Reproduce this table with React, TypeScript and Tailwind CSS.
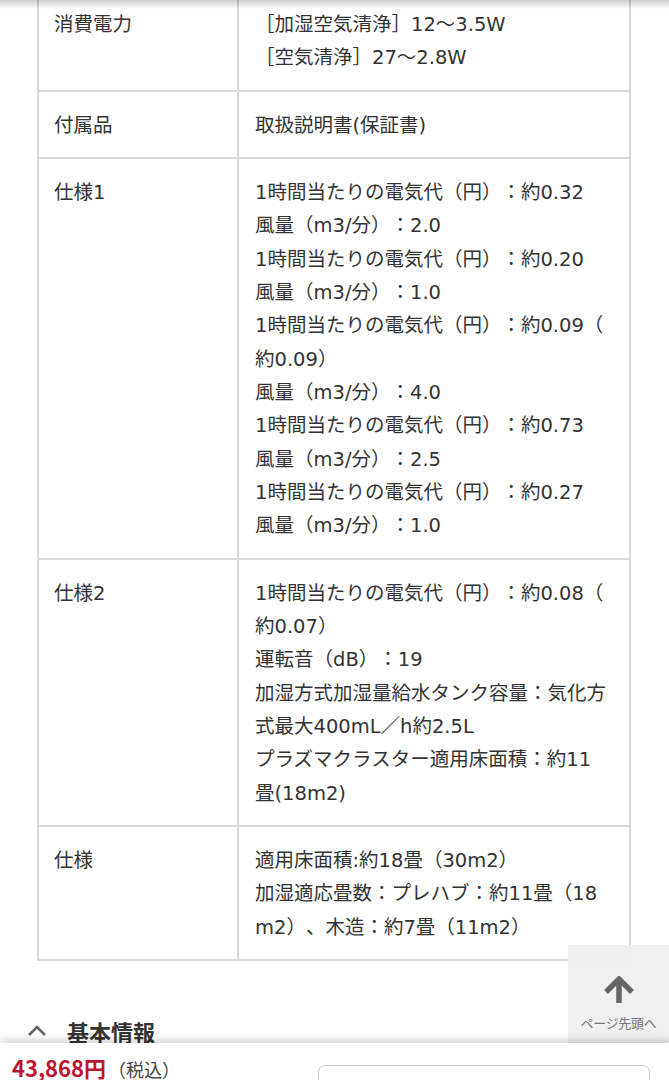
import React from "react";

const rows: { label: string; lines: string[] }[] = [
  { label: "消費電力", lines: ["［加湿空気清浄］12〜3.5W", "［空気清浄］27〜2.8W"] },
  { label: "付属品", lines: ["取扱説明書(保証書)"] },
  {
    label: "仕様1",
    lines: [
      "1時間当たりの電気代（円）：約0.32",
      "風量（m3/分）：2.0",
      "1時間当たりの電気代（円）：約0.20",
      "風量（m3/分）：1.0",
      "1時間当たりの電気代（円）：約0.09（",
      "約0.09）",
      "風量（m3/分）：4.0",
      "1時間当たりの電気代（円）：約0.73",
      "風量（m3/分）：2.5",
      "1時間当たりの電気代（円）：約0.27",
      "風量（m3/分）：1.0",
    ],
  },
  {
    label: "仕様2",
    lines: [
      "1時間当たりの電気代（円）：約0.08（",
      "約0.07）",
      "運転音（dB）：19",
      "加湿方式加湿量給水タンク容量：気化方",
      "式最大400mL／h約2.5L",
      "プラズマクラスター適用床面積：約11",
      "畳(18m2)",
    ],
  },
  {
    label: "仕様",
    lines: [
      "適用床面積:約18畳（30m2）",
      "加湿適応畳数：プレハブ：約11畳（18",
      "m2）、木造：約7畳（11m2）",
    ],
  },
];

export default function App() {
  return (
    <div
      className="relative h-[1080px] w-[669px] overflow-hidden bg-white text-[#333] [text-spacing-trim:space-all]"
      style={{ fontFamily: '"Noto Sans CJK JP", "Noto Sans", sans-serif' }}
    >
      <div className="pointer-events-none absolute inset-x-0 top-0 z-10 h-[9px] bg-gradient-to-b from-black/20 to-transparent" />

      <div
        className="ml-[37px] mt-[-11px] w-[594px] border-x-2 border-t-2 border-[#dadada]"
        style={{ fontFamily: '"DejaVu Sans", "Noto Sans CJK JP", sans-serif' }}
      >
        {rows.map((r) => (
          <div key={r.label} className="grid grid-cols-[200px_1fr] border-b-2 border-[#dadada]">
            <div className="border-r-2 border-[#dadada] pl-[15px] pt-[17px] pb-[15px] text-[19.5px] leading-[33.33px]">
              {r.label}
            </div>
            <div className="pl-[16px] pt-[17px] pb-[15px] text-[19.5px] leading-[33.33px]">
              {r.lines.map((l, i) => (
                <div key={i} className="whitespace-nowrap">
                  {l}
                </div>
              ))}
            </div>
          </div>
        ))}
      </div>

      <div className="mt-[55px] flex items-center pl-[27px]">
        <svg width="20" height="12" viewBox="0 0 20 12" className="mr-[20px]">
          <path d="M2 10 L10 2 L18 10" fill="none" stroke="#666" strokeWidth="2.6" />
        </svg>
        <span className="text-[22px] font-bold leading-[30px] text-[#333]">基本情報</span>
      </div>

      <div className="absolute right-0 top-[945px] flex h-[100px] w-[101px] flex-col items-center bg-[#efefef]/95">
        <svg width="32" height="28" viewBox="0 0 32 28" className="mt-[31px]">
          <path d="M16 4 V27" stroke="#666" strokeWidth="5.5" fill="none" />
          <path d="M3 16 L16 3 L29 16" stroke="#666" strokeWidth="5.5" fill="none" strokeLinejoin="miter" />
        </svg>
        <span className="mt-[11px] whitespace-nowrap text-[13px] leading-[15px] tracking-[-0.3px] text-[#777]">
          ページ先頭へ
        </span>
      </div>

      <div className="absolute inset-x-0 top-[1043px] h-[80px] bg-white shadow-[0_-3px_8px_rgba(0,0,0,0.18)]">
        <div className="flex items-baseline pl-[12px] pt-[12px]">
          <span className="text-[22px] font-bold leading-[24px] text-[#c0142c]">43,868円</span>
          <span className="ml-[2px] text-[18px] leading-[24px] text-[#444]">（税込）</span>
        </div>
        <div className="absolute left-[318px] top-[22px] h-[60px] w-[332px] rounded-[7px] border-[1.5px] border-[#c8c8c8] bg-white" />
      </div>
    </div>
  );
}
